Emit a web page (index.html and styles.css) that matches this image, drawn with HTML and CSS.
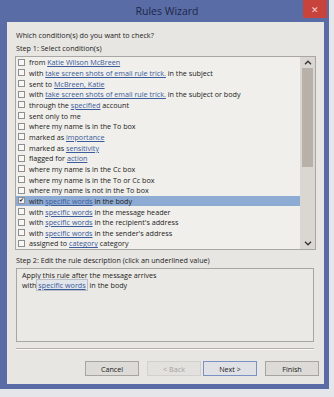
FILE: index.html
```html
<!DOCTYPE html>
<html lang="en">
<head>
  <meta charset="UTF-8" />
  <title>Rules Wizard</title>
  <link rel="stylesheet" href="styles.css">
</head>
<body>
  <div class="window">
    <div class="titlebar">
      <span class="title">Rules Wizard</span>
      <span class="close">&#x2715;</span>
    </div>

    <div class="content">
      <div class="label">Which condition(s) do you want to check?</div>
      <div class="label step">Step 1: Select condition(s)</div>

      <div class="listbox">
        <ul class="conditions">
          <li><span class="check"></span><span>from <a>Katie Wilson McBreen</a></span></li>
          <li><span class="check"></span><span>with <a>take screen shots of email rule trick.</a> in the subject</span></li>
          <li><span class="check"></span><span>sent to <a>McBreen, Katie</a></span></li>
          <li><span class="check"></span><span>with <a>take screen shots of email rule trick.</a> in the subject or body</span></li>
          <li><span class="check"></span><span>through the <a>specified</a> account</span></li>
          <li><span class="check"></span><span>sent only to me</span></li>
          <li><span class="check"></span><span>where my name is in the To box</span></li>
          <li><span class="check"></span><span>marked as <a>importance</a></span></li>
          <li><span class="check"></span><span>marked as <a>sensitivity</a></span></li>
          <li><span class="check"></span><span>flagged for <a>action</a></span></li>
          <li><span class="check"></span><span>where my name is in the Cc box</span></li>
          <li><span class="check"></span><span>where my name is in the To or Cc box</span></li>
          <li><span class="check"></span><span>where my name is not in the To box</span></li>
          <li class="selected"><span class="check checked">&#x2714;</span><span>with <a>specific words</a> in the body</span></li>
          <li><span class="check"></span><span>with <a>specific words</a> in the message header</span></li>
          <li><span class="check"></span><span>with <a>specific words</a> in the recipient's address</span></li>
          <li><span class="check"></span><span>with <a>specific words</a> in the sender's address</span></li>
          <li><span class="check"></span><span>assigned to <a>category</a> category</span></li>
        </ul>
        <div class="scrollbar">
          <span class="arrow">
            <svg width="8" height="5" viewBox="0 0 8 5"><path d="M1 4.2 L4 1.2 L7 4.2" fill="none" stroke="#333" stroke-width="1.3"/></svg>
          </span>
          <div class="thumb"></div>
          <span class="arrow down">
            <svg width="8" height="5" viewBox="0 0 8 5"><path d="M1 0.8 L4 3.8 L7 0.8" fill="none" stroke="#333" stroke-width="1.3"/></svg>
          </span>
        </div>
      </div>

      <div class="label step2">Step 2: Edit the rule description (click an underlined value)</div>
      <div class="description">
        <div>Apply this rule after the message arrives</div>
        <div>with<a class="value">specific words</a> in the body</div>
      </div>

      <div class="separator"></div>

      <div class="buttons">
        <button class="btn">Cancel</button>
        <button class="btn back" disabled>&lt; Back</button>
        <button class="btn next">Next &gt;</button>
        <button class="btn finish">Finish</button>
      </div>
    </div>
  </div>
</body>
</html>
```

FILE: styles.css
```css
body {
  margin: 0;
  background: #e4e6ea;
  font-family: "Open Sans", "Liberation Sans", sans-serif;
  font-size: 7.2px;
  color: #222;
}
.window {
  width: 329px;
  height: 389px;
  box-sizing: border-box;
  background: #5a6ca6;
  padding: 0 5px 5px 7px;
  display: flex;
  flex-direction: column;
}
.titlebar {
  height: 22px;
  margin: 0 -5px 0 -7px;
  display: grid;
  grid-template-columns: 1fr auto 1fr;
}
.title {
  grid-column: 2;
  align-self: center;
  padding-left: 5px;
  font-size: 10.5px;
  color: #1c2748;
}
.close {
  grid-column: 3;
  justify-self: end;
  width: 24px;
  height: 18px;
  margin-right: 2px;
  background: #c8433b;
  color: #f3d6d2;
  font-size: 9px;
  display: flex;
  align-items: center;
  justify-content: center;
}
.content {
  flex: 1;
  background: #e8e6e2;
  padding: 8px 8px 0;
  display: flex;
  flex-direction: column;
}
.label {
  line-height: 11px;
  padding-left: 1px;
}
.step {
  margin-top: 2px;
}
.listbox {
  margin-top: 2px;
  height: 194px;
  box-sizing: border-box;
  border: 1px solid #a9a7a3;
  background: #f0efeb;
  display: flex;
}
.conditions {
  flex: 1;
  margin: 0;
  padding: 0;
  list-style: none;
  overflow: hidden;
  white-space: nowrap;
}
.conditions li {
  height: calc(192px / 18);
  display: flex;
  align-items: center;
  padding-left: 2px;
}
.conditions li.selected {
  background: #8eabd3;
}
.check {
  width: 7px;
  height: 7px;
  box-sizing: border-box;
  border: 1px solid #8e8e8e;
  background: #f7f7f6;
  margin-right: 4px;
  flex: none;
  font-size: 6px;
  line-height: 5px;
  text-align: center;
  color: #111;
}
.check.checked {
  background: #eef1f6;
}
a {
  color: #3a5b9c;
  text-decoration: underline;
}
.scrollbar {
  width: 15px;
  background: #dad7d2;
  display: flex;
  flex-direction: column;
  align-items: center;
}
.arrow {
  height: 11px;
  display: flex;
  align-items: center;
}
.arrow.down {
  margin-top: auto;
}
.thumb {
  width: 11px;
  height: 99px;
  background: #b8b1a9;
}
.step2 {
  margin-top: 5px;
}
.description {
  margin: 2px 2px 0 1px;
  height: 74px;
  box-sizing: border-box;
  border: 1px solid #a8a6a2;
  background: #ebe9e5;
  padding: 1px 5px;
  line-height: 10px;
}
.value {
  background: #e2e5ea;
  border: 1px solid #b9bec8;
  padding: 0 1px;
}
.separator {
  margin: 6px 2px 0 1px;
  border-top: 1px solid #b3b0ab;
  border-bottom: 1px solid #f7f6f4;
}
.buttons {
  margin: 11px -3px 0 0;
  display: flex;
  justify-content: flex-end;
}
.btn {
  width: 54px;
  height: 15px;
  padding: 0;
  font-family: inherit;
  font-size: 7.2px;
  color: #1a1a1a;
  background: #dddbd7;
  border: 1px solid #a8a5a1;
  margin-left: 8px;
}
.back {
  color: #a3a19d;
  border-color: #d2d0cc;
  background: #e3e1dd;
}
.next {
  margin-left: 2px;
  border-color: #7a92c2;
  background: #dfe1e6;
}
```
